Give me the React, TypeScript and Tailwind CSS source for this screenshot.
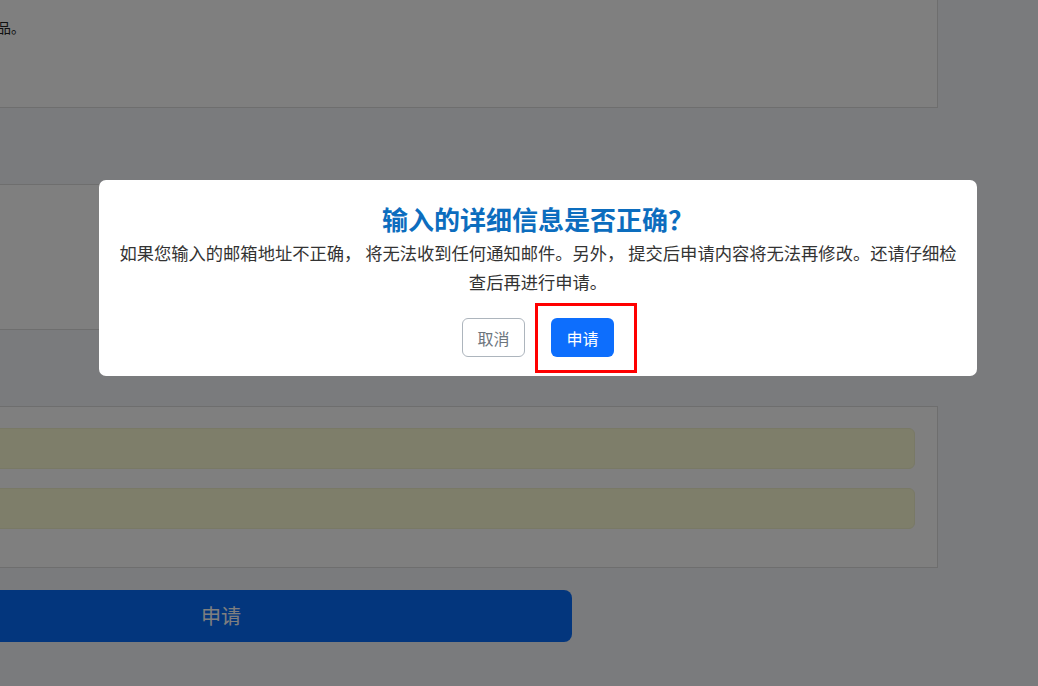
import React from "react";

const font = { fontFamily: '"Noto Sans CJK SC", "Noto Sans", sans-serif' };

const ConfirmModal = () => {
  return (
    <div className="absolute left-[99px] top-[180px] w-[878px] rounded-[7px] bg-white px-[16px] pt-[20px] pb-[19px] text-center">
      <h2 className="text-[26px] font-bold leading-[38px] text-[#0c6dbe]">
        输入的详细信息是否正确？
      </h2>
      <p className="text-[17.3px] leading-[29px] text-[#333333]">
        如果您输入的邮箱地址不正确， 将无法收到任何通知邮件。另外， 提交后申请内容将无法再修改。还请仔细检
        <br />
        查后再进行申请。
      </p>

      <div className="mt-[22px] flex items-center justify-center gap-[26px]">
        <button className="h-[39px] w-[63px] rounded-[6px] border border-[#adb5bd] bg-white text-[16px] text-[#6c757d]">
          取消
        </button>

        <div className="relative">
          <button className="h-[39px] w-[63px] rounded-[6px] bg-[#0d6efd] text-[16px] text-white">
            申请
          </button>
          {/* annotation box */}
          <div className="pointer-events-none absolute -left-[16px] -top-[15px] h-[70px] w-[102px] border-[3px] border-[#ff0000]" />
        </div>
      </div>
    </div>
  );
};

export default function App() {
  return (
    <div className="relative h-[686px] w-[1038px] overflow-hidden bg-[#f4f6fa]" style={font}>
      <div className="-ml-[130px] -mt-[40px] flex w-[1068px] flex-col">
        <div className="h-[148px] border border-[#dcdcdc] bg-white pl-[42px] pt-[53px]">
          <span className="text-[14px] leading-[21px] text-[#222222]">请确认所选商品。</span>
        </div>

        <div className="mt-[76px] h-[146px] border border-[#dcdcdc] bg-white" />

        <div className="mt-[76px] flex h-[162px] flex-col gap-[19px] border border-[#dcdcdc] bg-white pt-[21px] pr-[22px]">
          <div className="h-[41px] rounded-[6px] border border-[#f2f2cc] bg-[#fdfdd5]" />
          <div className="h-[41px] rounded-[6px] border border-[#f2f2cc] bg-[#fdfdd5]" />
        </div>

        <button className="mt-[22px] h-[52px] w-[702px] rounded-[8px] bg-[#076dfb] text-[20px] text-white">
          申请
        </button>
      </div>

      <div className="absolute inset-0 bg-black/50" />

      <ConfirmModal />
    </div>
  );
}
